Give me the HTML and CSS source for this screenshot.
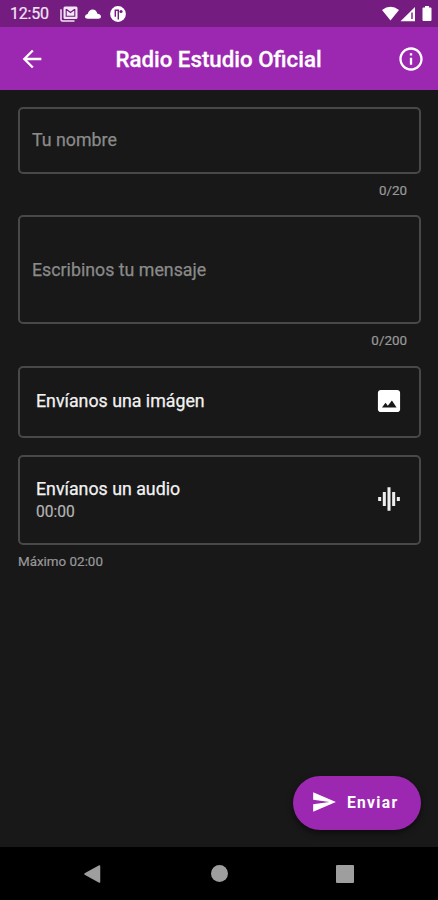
FILE: index.html
```html
<!DOCTYPE html>
<html lang="es">
<head>
<meta charset="utf-8">
<meta name="viewport" content="width=device-width, initial-scale=1">
<title>Radio Estudio Oficial</title>
<link rel="stylesheet" href="styles.css">
</head>
<body>
<div class="phone">
  <div class="status">
    <span class="clock">12:50</span>
    <svg class="notif" width="18" height="16" viewBox="0 0 18 16"><path d="M1 3.2V13.500Q1 15 2.500 15H14.500" fill="none" stroke="#f3e5f5" stroke-width="1.500"/><rect x="3.500" y="0.500" width="14" height="12.500" rx="1.500" fill="#f3e5f5"/><path d="M6.200 3.200L10.500 6.500L14.800 3.200M6.200 3V10.300H14.800V3" fill="none" stroke="#751c80" stroke-width="1.100"/></svg>
    <svg class="cloud" width="16" height="10" viewBox="0 0 16 10"><path d="M3 9.700C1 9.700 0 8.900 0 7.700C0 6.300 1.300 5.400 2.700 5.100C3.500 2 5.300.5 7.500.5C10 .5 11.700 2 12.400 4.700C14.700 5 16 6 16 7.700C16 8.900 14.900 9.700 13.300 9.700Z" fill="#fff"/></svg>
    <svg class="app" width="16" height="16" viewBox="0 0 16 16"><circle cx="8" cy="8" r="7.900" fill="#fff"/><path d="M5.300 10.800V4.300H8.300V13.500" fill="none" stroke="#751c80" stroke-width="1.400"/><circle cx="11" cy="5.500" r="1.600" fill="#751c80"/></svg>
    <svg class="system" width="52" height="18" viewBox="0 0 52 18"><path d="M1 5Q9.500-1.600 18 5L9.500 15.500Z" fill="#fff"/><path d="M34 2V16.300H19.500Z" fill="#fff"/><path d="M31 7.500V14" stroke="#751c80" stroke-width="1.400"/><path d="M44 1H48V2.500H49.500Q50.500 2.500 50.500 3.500V14.800Q50.500 16 49.500 16H42.500Q41.500 16 41.500 15V3.500Q41.500 2.500 42.500 2.500H44Z" fill="#fff"/></svg>
  </div>
  <header class="appbar">
    <svg width="28" height="28" viewBox="0 0 24 24"><path d="M20 11H7.830l5.590-5.590L12 4l-8 8 8 8 1.410-1.410L7.830 13H20z" fill="#fff"/></svg>
    <h1>Radio Estudio Oficial</h1>
    <svg width="28" height="28" viewBox="0 0 24 24"><path d="M11 7h2v2h-2zm0 4h2v6h-2zm1-9C6.480 2 2 6.480 2 12s4.480 10 10 10 10-4.480 10-10S17.520 2 12 2zm0 18c-4.410 0-8-3.590-8-8s3.590-8 8-8 8 3.590 8 8-3.590 8-8 8z" fill="#fff"/></svg>
  </header>
  <main>
    <div class="box name"><span class="hint">Tu nombre</span></div>
    <div class="count">0/20</div>
    <div class="box message"><span class="hint">Escribinos tu mensaje</span></div>
    <div class="count">0/200</div>
    <div class="box image">
      <span class="label">Envíanos una imágen</span>
      <svg width="28" height="28" viewBox="0 0 24 24"><path d="M21.500 19V5c0-1.400-1.100-2.500-2.500-2.500H5c-1.400 0-2.500 1.100-2.500 2.500v14c0 1.400 1.100 2.500 2.500 2.500h14c1.400 0 2.500-1.100 2.500-2.500z" fill="#fff"/><path d="M6 17.500l3-4 2 2.500 3.500-4.500L18.500 17.500z" fill="#181818"/></svg>
    </div>
    <div class="box audio">
      <div><div class="label">Envíanos un audio</div><div class="time">00:00</div></div>
      <svg width="28" height="28" viewBox="0 0 24 24"><path d="M6.700 18h2.600V6H6.700v12zm4 4h2.600V2h-2.600v20zm-8-8.300h2.600v-3.400H2.700v3.400zm12 4.300h2.600V6h-2.600v12zm4-7.700v3.400h2.600v-3.400h-2.600z" fill="#eee"/></svg>
    </div>
    <div class="max">Máximo 02:00</div>
    <div class="fab">
      <svg width="26" height="26" viewBox="0 0 24 24"><path d="M2.010 21L23 12 2.010 3 2 10l15 2-15 2z" fill="#fff"/></svg>
      <span>Enviar</span>
    </div>
  </main>
  <nav>
    <svg width="18" height="20" viewBox="0 0 18 20"><path d="M16.500 2V18L2 10Z" fill="#9e9e9e" stroke="#9e9e9e" stroke-width="1.500" stroke-linejoin="round"/></svg>
    <span class="home"></span>
    <span class="recent"></span>
  </nav>
</div>
</body>
</html>
```
FILE: styles.css
```css
* { box-sizing: border-box; }
body { margin: 0; background: #181818; font-family: Roboto, sans-serif; }
svg { display: block; flex: none; }
.phone { width: 438px; height: 900px; display: flex; flex-direction: column; background: #181818; overflow: hidden; }
.status { height: 27px; background: #751c80; display: flex; align-items: center; padding: 1px 5px 0 10px; }
.clock { font-size: 16px; line-height: 18px; width: 50px; color: #f3e5f5; letter-spacing: -0.2px; -webkit-text-stroke: 0.2px; }
.cloud { margin-left: 7px; }
.app { margin-left: 9px; }
.system { margin-left: auto; }
.appbar { height: 63px; background: #9c27b0; display: flex; align-items: center; justify-content: space-between; padding: 0 13px 0 18px; }
h1 { margin: 0 6px 0 0; font-size: 22.300px; line-height: 28px; font-weight: 500; color: #fff; white-space: nowrap; -webkit-text-stroke: 0.3px; }
main { flex: 1; display: flex; flex-direction: column; padding: 17px 17px 17px 18px; }
.box { border: 2px solid #484848; border-radius: 5px; display: flex; align-items: center; justify-content: space-between; }
.name { height: 67px; padding: 0 12px 2px; }
.message { height: 109px; padding: 0 12px; }
.hint { font-size: 17.800px; line-height: 22px; color: #8a8a8a; -webkit-text-stroke: 0.25px; }
.count { height: 41px; padding: 8px 14px 0 0; text-align: right; font-size: 13.400px; line-height: 18px; color: #999; -webkit-text-stroke: 0.2px; }
.image { height: 72px; margin-top: 1px; padding: 0 16px; }
.image .label { margin-top: -2px; }
.image svg { margin-top: -2px; }
.audio { height: 90px; margin-top: 17px; padding: 0 16px; }
.audio svg { margin-top: -2px; }
.label { font-size: 17.800px; line-height: 22px; color: #f2f2f2; -webkit-text-stroke: 0.25px; }
.time { font-size: 15.600px; line-height: 22px; padding-top: 1px; margin-bottom: -1px; color: #b5b5b5; -webkit-text-stroke: 0.2px; }
.max { margin-top: 8px; font-size: 13.400px; line-height: 18px; color: #999; -webkit-text-stroke: 0.2px; }
.fab { width: 128px; height: 54px; margin-top: auto; align-self: flex-end; border-radius: 27px; background: #9c27b0; display: flex; align-items: center; padding-left: 18px; gap: 10px; color: #fff; font-size: 15.600px; font-weight: 700; letter-spacing: 1.300px; box-shadow: 0 3px 6px rgba(0, 0, 0, .5); }
.fab svg { margin-top: -2px; }
nav { height: 53px; background: #000; display: flex; align-items: center; justify-content: space-between; padding: 0 84px 0 83px; }
.home { width: 17px; height: 17px; margin-left: 2px; border-radius: 50%; background: #9e9e9e; }
.recent { width: 18px; height: 18px; border-radius: 1px; background: #9e9e9e; }
```
